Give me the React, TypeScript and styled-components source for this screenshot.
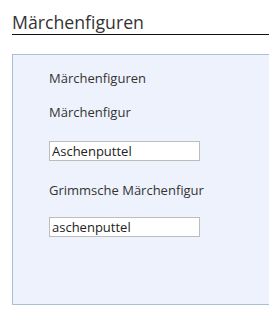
import styled, { createGlobalStyle } from 'styled-components'

const GlobalStyle = createGlobalStyle`
  html, body {
    margin: 0;
    padding: 0;
    background: #ffffff;
  }
`

type Field = {
  label: string
  value: string
}

const fields: Field[] = [
  { label: 'Märchenfigur', value: 'Aschenputtel' },
  { label: 'Grimmsche Märchenfigur', value: 'aschenputtel' },
]

export default function App() {
  return (
    <Page>
      <GlobalStyle />
      <Heading>Märchenfiguren</Heading>
      <Panel>
        <Caption>Märchenfiguren</Caption>
        {fields.map((f) => (
          <FieldGroup key={f.label}>
            <Label>{f.label}</Label>
            <TextInput type="text" defaultValue={f.value} />
          </FieldGroup>
        ))}
      </Panel>
    </Page>
  )
}

const Page = styled.div`
  padding: 10px 0 0 12px;
  font-family: 'Open Sans', 'Liberation Sans', sans-serif;
  color: #333333;
`

const Heading = styled.h1`
  margin: 0;
  font-size: 17.7px;
  font-weight: normal;
  line-height: 24px;
  color: #333333;
  border-bottom: 1px solid #111111;
`

const Panel = styled.div`
  margin-top: 19px;
  height: 251px;
  box-sizing: border-box;
  padding: 14px 0 0 36px;
  background: #eef2fd;
  border: 1px solid #abc0d8;
  border-right: none;
  display: flex;
  flex-direction: column;
`

const Caption = styled.div`
  font-size: 13px;
  line-height: 18px;
`

const FieldGroup = styled.div`
  display: flex;
  flex-direction: column;
  align-items: flex-start;
  margin-top: 16px;

  & + & {
    margin-top: 20px;
  }
`

const Label = styled.label`
  font-size: 13px;
  line-height: 18px;
  margin-bottom: 20px;

  ${FieldGroup} + ${FieldGroup} & {
    margin-bottom: 18px;
  }
`

const TextInput = styled.input`
  box-sizing: border-box;
  width: 151px;
  height: 20px;
  margin: 0;
  padding: 0 2px;
  border: 1px solid #bdbdbd;
  background: #ffffff;
  font-family: 'Open Sans', 'Liberation Sans', sans-serif;
  font-size: 13px;
  color: #222222;
  outline: none;
`
